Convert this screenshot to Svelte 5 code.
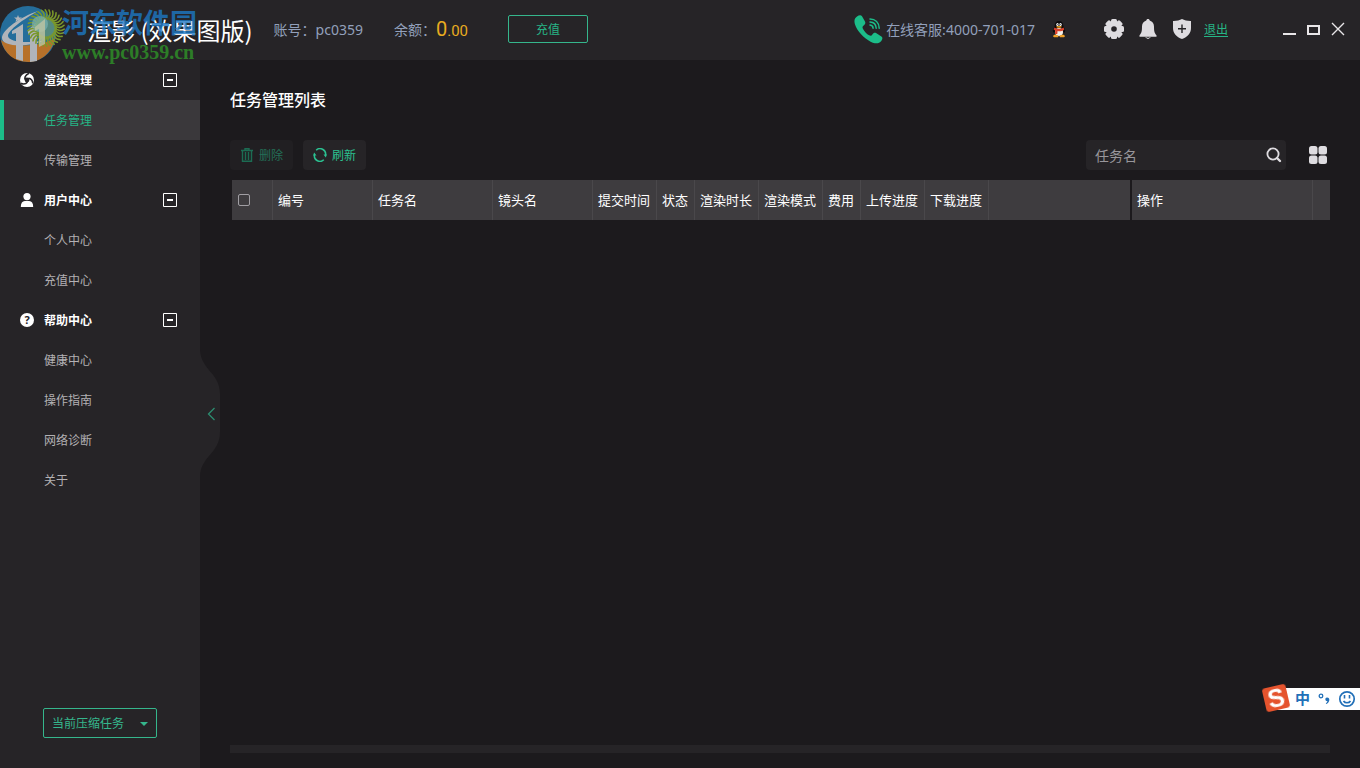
<script>
    let keyword = '';
    let allChecked = false;
    let sidebarOpen = true;

    let groups = [
        {
            name: '渲染管理',
            icon: 'render',
            open: true,
            items: ['任务管理', '传输管理']
        },
        {
            name: '用户中心',
            icon: 'user',
            open: true,
            items: ['个人中心', '充值中心']
        },
        {
            name: '帮助中心',
            icon: 'help',
            open: true,
            items: ['健康中心', '操作指南', '网络诊断', '关于']
        }
    ];

    let active = '任务管理';

    const columns = [
        {label: '编号', size: 'w100'},
        {label: '任务名', size: 'w120'},
        {label: '镜头名', size: 'w100'},
        {label: '提交时间', size: 'w64'},
        {label: '状态', size: 'w38'},
        {label: '渲染时长', size: 'w64'},
        {label: '渲染模式', size: 'w64'},
        {label: '费用', size: 'w38'},
        {label: '上传进度', size: 'w64'},
        {label: '下载进度', size: 'w64'}
    ];

    // petals of the round badge next to the site logo
    const petals = Array.from({length: 30}, (_, i) => i * 12);

    const toggleGroup = (index) => {
        groups[index].open = !groups[index].open;
    }

    const toggleSidebar = () => {
        sidebarOpen = !sidebarOpen;
    }
</script>

<div class="app">
    <header>
        <h1>渲影 (效果图版)</h1>
        <span class="account">账号：pc0359</span>
        <span class="balance">余额：<b>0<small>.00</small></b></span>
        <button type="button" class="recharge">充值</button>

        <div class="service">
            <svg width="29" height="29" viewBox="0 0 29 29" aria-hidden="true">
                <path fill="#1cbd89" d="M3 1.500C5 .1 7 0 8 1.200l3 5.300c.8 1.600.2 2.900-1.600 4.200-1.200.9-1.100 2-.2 3.600 1.400 2.600 3.500 4.700 5.900 6 1.500.7 2.500.5 3.300-.8 1-1.600 2.400-2.100 4-1.200l5 3.200c1.400.9 1.300 2.600-.1 4.400-2.300 3-6.200 3.100-10.700.8C9.200 22.800 3.300 16.100 1 9.500-.2 5.700.6 3.200 3 1.500z" />
                <path fill="none" stroke="#1cbd89" stroke-width="1.500" stroke-linecap="round" d="M16 10c2 .2 3 1.300 3.100 3.200M16 7c3.700.1 6 2.700 6.200 6.200M16 4c5.400.1 9 3.700 9.200 9.200" />
            </svg>
            <span>在线客服:4000-701-017</span>
        </div>

        <a class="qq" href="#qq" aria-label="QQ">
            <svg width="14" height="18" viewBox="0 0 14 18" aria-hidden="true">
                <path fill="#0c0b0d" d="M7 1c3 0 4.300 2 4.300 5l2 4.500-.6 2.200-1.200-1C11 15 9.500 16 7 16s-4-1-4.500-4.300l-1.200 1-.6-2.200 2-4.500C2.700 3 4 1 7 1z" />
                <ellipse cx="7" cy="12" rx="4" ry="4" fill="#f4eee6" />
                <ellipse cx="5.500" cy="4.400" rx="1.200" ry="1.500" fill="#fff" />
                <ellipse cx="8.500" cy="4.400" rx="1.200" ry="1.500" fill="#fff" />
                <circle cx="5.900" cy="4.500" r=".5" />
                <circle cx="8.100" cy="4.500" r=".5" />
                <ellipse cx="7" cy="6.800" rx="2.800" ry=".9" fill="#f2a51d" />
                <path fill="#d8402a" d="M2.400 7.500C5 9.200 9 9.200 11.600 7.500l.7 2.200C10 11.300 7.500 11.500 5.600 11l-.3 3H3l.2-3.600-1.600-.9z" />
                <path fill="#f0a126" d="M1 16.200c0-1 1.800-1.900 4-1.200l1.700.9-.8 1.300H2zM13 16.200c0-1-1.800-1.900-4-1.200l-1.700.9.8 1.300H12z" />
            </svg>
        </a>

        <div class="tools">
            <button type="button" aria-label="设置">
                <svg width="20" height="20" viewBox="0 0 20 20" aria-hidden="true">
                    <g fill="#dedce0">
                        {#each [0, 45, 90, 135] as angle}
                            <rect x="7" y="0" width="6" height="20" rx="1.500" transform="rotate({angle} 10 10)" />
                        {/each}
                        <circle cx="10" cy="10" r="8" />
                    </g>
                    <circle cx="10" cy="10" r="2.800" fill="#262427" />
                </svg>
            </button>
            <button type="button" aria-label="消息">
                <svg width="20" height="20" viewBox="0 0 20 20" aria-hidden="true">
                    <path fill="#dedce0" d="M10 0c1 0 1.700.6 1.700 1.600C14.500 2.500 16 4.700 16 7.500c0 4.500.4 6.500 2.500 8.800v1.500h-17v-1.500C3.600 14 4 12 4 7.500c0-2.800 1.500-5 4.300-5.900C8.300.6 9 0 10 0z" />
                    <path fill="none" stroke="#dedce0" d="M7.800 18.200c.8 1.600 3.600 1.600 4.400 0" />
                </svg>
            </button>
            <button type="button" aria-label="安全">
                <svg width="20" height="20" viewBox="0 0 20 20" aria-hidden="true">
                    <path fill="#dedce0" d="M10 0c2.500 1.300 5.500 2 9 1.900V9c0 5.400-3.500 9-9 11-5.500-2-9-5.600-9-11V1.900C4.500 2 7.500 1.300 10 0z" />
                    <path fill="none" stroke="#262427" stroke-width="1.400" d="M10 5.500v8.500M6 9.700h8" />
                </svg>
            </button>
            <a class="logout" href="#logout">退出</a>
        </div>

        <div class="window-controls">
            <button type="button" aria-label="最小化">
                <svg width="14" height="14" viewBox="0 0 14 14" aria-hidden="true"><path fill="#e8e6e8" d="M0 11h13v2H0z" /></svg>
            </button>
            <button type="button" aria-label="最大化">
                <svg width="14" height="14" viewBox="0 0 14 14" aria-hidden="true"><path fill="none" stroke="#e8e6e8" stroke-width="2" d="M1 4h11v8H1z" /></svg>
            </button>
            <button type="button" aria-label="关闭">
                <svg width="14" height="14" viewBox="0 0 14 14" aria-hidden="true"><path fill="none" stroke="#e8e6e8" stroke-width="1.400" d="M1 1l12 12M13 1L1 13" /></svg>
            </button>
        </div>

        <div class="watermark">
            <svg width="66" height="60" viewBox="0 0 66 60" aria-hidden="true">
                <circle cx="28" cy="30" r="28" fill="#2580b8" />
                <path fill="#dc852b" d="M1 36c9 7 38 8 54-2-3 14-13 24-27 24S4 49 1 36z" />
                <path fill="#d3d9df" d="M12 27l11-7v37l-7-2V29l-4 1zM28 26l9-8v39l-7 1V29l-2 1z" />
                <path fill="#d3d9df" d="M38 7C20 13 2 26 2 34c0 9 26 10 44 2C28 40 8 38 8 32c0-6 16-17 30-25z" />
                <path fill="#d3d9df" d="M18 11l1 2.500h3l-2.300 1.700.8 2.800-2.500-1.700-2.500 1.700.8-2.800L14 13.500h3z" />
                <circle cx="46" cy="24" r="11" fill="#9cc776" opacity=".5" />
                {#each petals as angle}
                    <path fill="none" stroke="#8fb52c" stroke-width="1.600" stroke-linecap="round" d="M46 15c4-2 5-5 3-9" transform="rotate({angle} 46 24)" />
                {/each}
                <circle cx="40" cy="20" r="8" fill="#8ed6d6" opacity=".7" />
                <path fill="#e4ecc0" d="M35 23l10-8v25l-6 3V25l-4 2z" opacity=".8" />
            </svg>
            <div class="watermark-text">
                <span class="site">河东软件园</span>
                <span class="url">www.pc0359.cn</span>
            </div>
        </div>
    </header>

    <div class="body">
        {#if sidebarOpen}
            <aside>
                <nav>
                    {#each groups as group, index}
                        <button type="button" class="group" aria-expanded={group.open} on:click={() => toggleGroup(index)}>
                            <svg width="14" height="14" viewBox="0 0 14 14" aria-hidden="true">
                                {#if group.icon === 'render'}
                                    <circle cx="7" cy="7" r="7" fill="#fff" />
                                    <circle cx="7" cy="7" r="2.400" fill="#262427" />
                                    <path fill="none" stroke="#262427" stroke-width="1.600" d="M5 6.500C4.500 4 6 1.800 9 .4M8.500 5.300c2.500.3 4 2 4.300 5M7.500 9c-1.500 2-4 2.500-6.500 1.200" />
                                {:else if group.icon === 'user'}
                                    <circle cx="7" cy="3.600" r="3.600" fill="#fff" />
                                    <path fill="#fff" d="M.8 14c0-4 1.500-6 4-6h4.400c2.500 0 4 2 4 6z" />
                                {:else}
                                    <circle cx="7" cy="7" r="7" fill="#fff" />
                                    <text x="7" y="11" text-anchor="middle" class="question">?</text>
                                {/if}
                            </svg>
                            <span>{group.name}</span>
                            <svg width="14" height="14" viewBox="0 0 14 14" aria-hidden="true">
                                <path fill="none" stroke="#fff" d="M.5.5h13v13H.5z" />
                                <path fill="#fff" d="M4 6h6v2H4z" />
                            </svg>
                        </button>
                        {#if group.open}
                            {#each group.items as item}
                                <a href="#{item}" class="item" class:active={item === active} on:click|preventDefault={() => active = item}>{item}</a>
                            {/each}
                        {/if}
                    {/each}
                </nav>

                <div class="compress">
                    <select aria-label="当前压缩任务">
                        <option>当前压缩任务</option>
                    </select>
                    <svg width="8" height="4" viewBox="0 0 8 4" aria-hidden="true"><path fill="#35b68c" d="M0 0h8L4 4z" /></svg>
                </div>
            </aside>
        {/if}

        <main>
            <button type="button" class="collapse" aria-label="收起" on:click={toggleSidebar}>
                <svg width="20" height="126" viewBox="0 0 20 126" aria-hidden="true">
                    <path fill="#262427" d="M0 0c1 20 20 23 20 44v38c0 21-19 24-20 44z" />
                    <path fill="none" stroke="#2c8d70" stroke-width="1.300" d="M14.500 58l-6 6 6 6" />
                </svg>
            </button>

            <h2>任务管理列表</h2>

            <div class="toolbar">
                <button type="button" class="action" disabled>
                    <svg width="14" height="14" viewBox="0 0 14 14" aria-hidden="true">
                        <path fill="none" stroke="#1cbd89" stroke-width="1.400" d="M1 2.500h12M5 2V.7h4V2M2.500 3v10.300h9V3M5.500 4v8M8.500 4v8" />
                    </svg>
                    删除
                </button>
                <button type="button" class="action">
                    <svg width="14" height="14" viewBox="0 0 14 14" aria-hidden="true">
                        <path fill="none" stroke="#2bc191" stroke-width="1.500" d="M3.200 2.200A5.600 5.600 0 0 1 12.600 7M1.400 7a5.600 5.600 0 0 0 9.400 4.800" />
                        <path fill="#2bc191" d="M10.500 6.500H14L12.800 9.500zM0 7.500h3.500L1.200 4.500z" />
                    </svg>
                    刷新
                </button>

                <div class="search">
                    <input type="text" placeholder="任务名" aria-label="任务名" bind:value={keyword} />
                    <button type="button" aria-label="搜索">
                        <svg width="16" height="16" viewBox="0 0 16 16" aria-hidden="true">
                            <circle cx="7" cy="7" r="5.600" fill="none" stroke="#dedce0" stroke-width="1.800" />
                            <path stroke="#dedce0" stroke-width="2.400" stroke-linecap="round" d="M11 11l3 3" />
                        </svg>
                    </button>
                </div>

                <button type="button" class="grid-view" aria-label="网格视图">
                    <svg width="20" height="20" viewBox="0 0 20 20" aria-hidden="true">
                        <g fill="#dedce0">
                            <rect x="1" y="1" width="8.500" height="8.500" rx="2.500" />
                            <rect x="10.500" y="1" width="8.500" height="8.500" rx="2.500" />
                            <rect x="1" y="10.500" width="8.500" height="8.500" rx="2.500" />
                            <rect x="10.500" y="10.500" width="8.500" height="8.500" rx="2.500" />
                        </g>
                    </svg>
                </button>
            </div>

            <table>
                <thead>
                    <tr>
                        <th class="w40"><input type="checkbox" aria-label="全选" bind:checked={allChecked} /></th>
                        {#each columns as column}
                            <th class={column.size}>{column.label}</th>
                        {/each}
                        <th class="filler"></th>
                        <th class="w182">操作</th>
                        <th class="w18"></th>
                    </tr>
                </thead>
            </table>

            <div class="scrollbar"></div>
        </main>
    </div>

    <div class="ime">
        <svg class="ime-logo" width="30" height="30" viewBox="0 0 30 30" aria-hidden="true">
            <g transform="rotate(-13 15 15)">
                <rect x="3" y="3" width="24" height="24" rx="3" fill="#e5532d" />
                <text x="15" y="24" text-anchor="middle" class="ime-letter">S</text>
            </g>
        </svg>
        <span>中</span>
        <svg width="14" height="16" viewBox="0 0 14 16" aria-hidden="true">
            <circle cx="4" cy="5" r="1.800" fill="none" stroke="#2270b8" stroke-width="1.300" />
            <path fill="#2270b8" d="M10 6.500c2 0 2.700 1.400 2.200 3.200-.4 1.600-1.400 2.700-3 3.300l-.4-.8c1-.5 1.500-1.100 1.600-1.900C7.800 10.200 7.700 6.500 10 6.500z" />
        </svg>
        <svg width="18" height="18" viewBox="0 0 18 18" aria-hidden="true">
            <circle cx="9" cy="9" r="7.200" fill="none" stroke="#2270b8" stroke-width="1.700" />
            <path fill="none" stroke="#2270b8" stroke-width="1.600" d="M6.500 5v3.500M11.500 5v3.500M5.500 11c1.500 2.400 5.500 2.400 7 0" />
        </svg>
    </div>
</div>

<style>
    :global(body) {
        background: #1c1a1d;
        font-family: "Noto Sans", "Noto Sans CJK SC", sans-serif;
        font-size: 12px;
    }

    .app {
        display: flex;
        flex-direction: column;
        min-height: 100vh;
        color: #fff;
    }

    button {
        padding: 0;
        border: 0;
        background: none;
        color: inherit;
        font: inherit;
        cursor: pointer;
    }

    svg {
        display: block;
        flex: none;
    }

    header {
        position: relative;
        display: flex;
        align-items: center;
        box-sizing: border-box;
        height: 60px;
        padding: 0 15px 2px 87px;
        background: #262427;
        color: #92a0bb;
        font-size: 14px;
        white-space: nowrap;
    }

    h1 {
        margin: 0 21px 0 0;
        color: #fff;
        font-size: 24px;
        font-weight: 400;
        font-family: "Noto Sans CJK SC", sans-serif;
    }

    .account {
        margin-right: 31px;
    }

    .balance {
        display: flex;
        align-items: center;
        margin-right: 40px;
    }

    .balance b {
        color: #e8ac20;
        font-family: Roboto, sans-serif;
        font-size: 20px;
        font-weight: 400;
    }

    .balance small {
        font-size: 15px;
    }

    .recharge {
        width: 80px;
        height: 28px;
        border: 1px solid #35b68c;
        border-radius: 2px;
        color: #26b586;
        font-size: 12px;
    }

    .service {
        display: flex;
        align-items: center;
        gap: 3px;
        margin-left: auto;
    }

    .qq {
        margin: 0 38px 0 17px;
    }

    .tools {
        display: flex;
        align-items: center;
        gap: 14px;
    }

    .tools a {
        margin-left: -2px;
    }

    .logout {
        color: #26b586;
        font-size: 12px;
        text-underline-offset: 2px;
    }

    .window-controls {
        display: flex;
        gap: 10px;
        margin-left: 55px;
    }

    .watermark {
        position: absolute;
        top: 4px;
        left: 0;
        display: flex;
        opacity: 0.8;
        pointer-events: none;
    }

    .watermark-text {
        display: flex;
        flex-direction: column;
        margin-left: -4px;
    }

    .site {
        color: #1d78c4;
        font-size: 27px;
        font-weight: 700;
        line-height: 38px;
    }

    .url {
        color: #2f9428;
        font-family: "Liberation Serif", serif;
        font-size: 20px;
        font-weight: 700;
        line-height: 20px;
    }

    .body {
        display: flex;
        flex: 1;
    }

    aside {
        display: flex;
        flex: none;
        flex-direction: column;
        justify-content: space-between;
        width: 200px;
        background: #262427;
    }

    .group {
        display: flex;
        align-items: center;
        gap: 10px;
        width: 100%;
        height: 40px;
        padding: 0 23px 0 20px;
        font-weight: 700;
        text-align: left;
    }

    .group span {
        flex: 1;
    }

    .question {
        fill: #262427;
        font-size: 11px;
        font-weight: 700;
    }

    .item {
        display: block;
        box-sizing: border-box;
        height: 40px;
        padding: 1px 0 0 40px;
        border-left: 4px solid transparent;
        color: #b3b1b4;
        line-height: 40px;
        text-decoration: none;
    }

    .item.active {
        border-color: #1cbd89;
        background: #3a383b;
        color: #26b586;
    }

    .compress {
        position: relative;
        margin: 0 43px 30px;
    }

    .compress select {
        display: block;
        width: 100%;
        height: 30px;
        padding: 0 8px;
        border: 1px solid #35b68c;
        border-radius: 2px;
        appearance: none;
        background: none;
        color: #35b68c;
        font: inherit;
    }

    .compress svg {
        position: absolute;
        top: 14px;
        right: 9px;
        pointer-events: none;
    }

    main {
        position: relative;
        display: flex;
        flex: 1;
        flex-direction: column;
        min-width: 0;
        padding: 28px 30px 15px;
    }

    .collapse {
        position: absolute;
        top: 290px;
        left: 0;
    }

    h2 {
        margin: 0 0 28px;
        font-size: 16px;
        font-weight: 500;
        line-height: 24px;
    }

    .toolbar {
        display: flex;
        align-items: center;
        gap: 10px;
        margin-bottom: 10px;
    }

    .action {
        display: flex;
        align-items: center;
        justify-content: center;
        gap: 5px;
        width: 63px;
        height: 30px;
        border-radius: 4px;
        background: #262427;
        color: #2bc191;
    }

    .action:disabled {
        opacity: 0.5;
        cursor: default;
    }

    .search {
        display: flex;
        align-items: center;
        width: 200px;
        height: 30px;
        margin-left: auto;
        border-radius: 4px;
        background: #262427;
    }

    .search input {
        flex: 1;
        min-width: 0;
        padding: 0 9px;
        border: 0;
        outline: 0;
        background: none;
        color: #fff;
        font: inherit;
        font-size: 14px;
    }

    .search input::placeholder {
        color: #98969b;
    }

    .search button {
        margin-right: 4px;
    }

    .grid-view {
        margin: 0 2px 0 12px;
    }

    table {
        width: calc(100% - 2px);
        margin-left: 2px;
        border-collapse: separate;
        border-spacing: 0;
        table-layout: fixed;
    }

    th {
        box-sizing: border-box;
        height: 40px;
        padding: 0 0 2px 5px;
        border-right: 1px solid #4a484b;
        background: #3e3c3f;
        font-size: 13px;
        font-weight: 400;
        text-align: left;
        white-space: nowrap;
    }

    th input {
        display: block;
        width: 12px;
        height: 12px;
        margin: 2px 1px 0;
        border: 1px solid #a09ea3;
        border-radius: 2px;
        appearance: none;
    }

    th input:checked {
        background: #1cbd89;
    }

    .filler {
        border-right: 2px solid #1c1a1d;
    }

    .w18 {
        width: 17px;
        border-right: 0;
    }

    .w38 {
        width: 38px;
    }

    .w40 {
        width: 41px;
    }

    .w64 {
        width: 64px;
    }

    .w100 {
        width: 100px;
    }

    .w120 {
        width: 120px;
    }

    .w182 {
        width: 181px;
    }

    .scrollbar {
        height: 8px;
        margin-top: auto;
        background: #262427;
    }

    .ime {
        position: fixed;
        right: 0;
        bottom: 58px;
        display: flex;
        align-items: center;
        gap: 7px;
        height: 22px;
        padding: 0 4px 0 20px;
        background: #fff;
        color: #2270b8;
        font-size: 15px;
        font-weight: 700;
        line-height: 20px;
    }

    .ime span {
        padding-bottom: 2px;
    }

    .ime-logo {
        position: absolute;
        bottom: -3px;
        left: -14px;
        overflow: visible;
    }

    .ime-letter {
        fill: #fff;
        font-family: "Liberation Sans", sans-serif;
        font-size: 25px;
        font-weight: 700;
    }
</style>
